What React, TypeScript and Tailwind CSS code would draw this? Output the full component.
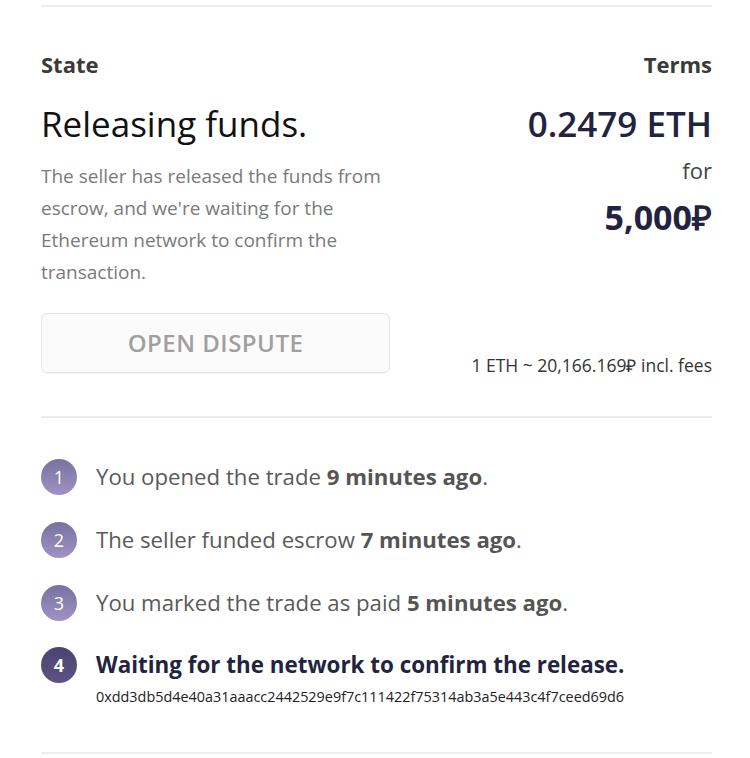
const steps = [
  { n: 1, text: 'You opened the trade ', time: '9 minutes ago' },
  { n: 2, text: 'The seller funded escrow ', time: '7 minutes ago' },
  { n: 3, text: 'You marked the trade as paid ', time: '5 minutes ago' },
];

const Divider = () => <div className="h-[2px] bg-[#ececf3]" />;

export default function App() {
  return (
    <div
      className="min-h-screen bg-white pl-[41px] pr-[38px] pt-[5px] text-[#333]"
      style={{ fontFamily: '"Open Sans", "Liberation Sans", sans-serif' }}>
      <Divider />

      <div className="flex justify-between pt-[43px] pb-[43px]">
        <div className="w-[350px]">
          <h3 className="text-[22px] font-bold leading-[28px] text-[#3a3a3a]">State</h3>
          <h1 className="mt-[24px] text-[35px] leading-[44px] text-[#111]">Releasing funds.</h1>
          <p className="mt-[14px] text-[19px] leading-[32px] text-[#7a7a7a]">
            The seller has released the funds from escrow, and we're waiting for the Ethereum
            network to confirm the transaction.
          </p>
          <button className="mt-[25px] h-[60px] w-[349px] rounded-[6px] border border-[#e4e4e4] bg-[#fbfbfb] text-[24px] font-semibold tracking-[0.5px] text-[#a0a0a0] shadow-[0_1px_1px_rgba(0,0,0,0.03)]">
            OPEN DISPUTE
          </button>
        </div>

        <div className="flex flex-col items-end text-right">
          <h3 className="text-[22px] font-bold leading-[28px] text-[#3a3a3a]">Terms</h3>
          <div className="mt-[24px] text-[35px] font-semibold leading-[44px] text-[#22243f]">
            0.2479 ETH
          </div>
          <div className="mt-[9px] text-[22px] leading-[30px] text-[#444]">for</div>
          <div className="mt-[10px] text-[34px] font-bold leading-[44px] text-[#22243f]">
            5,000₽
          </div>
          <div className="mt-auto text-[17.5px] leading-[16px] text-[#333]">
            1 ETH ~ 20,166.169₽ incl. fees
          </div>
        </div>
      </div>

      <Divider />

      <ol className="pt-[41px] pb-[45px]">
        {steps.map((s) => (
          <li key={s.n} className="mb-[27px] flex items-center gap-[19px]">
            <span className="flex h-[36px] w-[36px] shrink-0 items-center justify-center rounded-full bg-gradient-to-b from-[#77739f] to-[#a092c4] text-[18px] text-white">
              {s.n}
            </span>
            <span className="text-[22.2px] leading-[36px] text-[#5a5a5a]">
              {s.text}
              <b className="font-bold text-[#555]">{s.time}</b>.
            </span>
          </li>
        ))}
        <li className="-mt-[1px] flex gap-[19px]">
          <span className="flex h-[36px] w-[36px] shrink-0 items-center justify-center rounded-full bg-gradient-to-b from-[#4a4470] to-[#5d5285] text-[18px] font-bold text-white">
            4
          </span>
          <div>
            <div className="text-[22.4px] font-bold leading-[36px] text-[#22243f]">
              Waiting for the network to confirm the release.
            </div>
            <div className="mt-[4px] text-[14.4px] leading-[20px] text-[#222]">
              0xdd3db5d4e40a31aaacc2442529e9f7c111422f75314ab3a5e443c4f7ceed69d6
            </div>
          </div>
        </li>
      </ol>

      <Divider />
    </div>
  );
}
